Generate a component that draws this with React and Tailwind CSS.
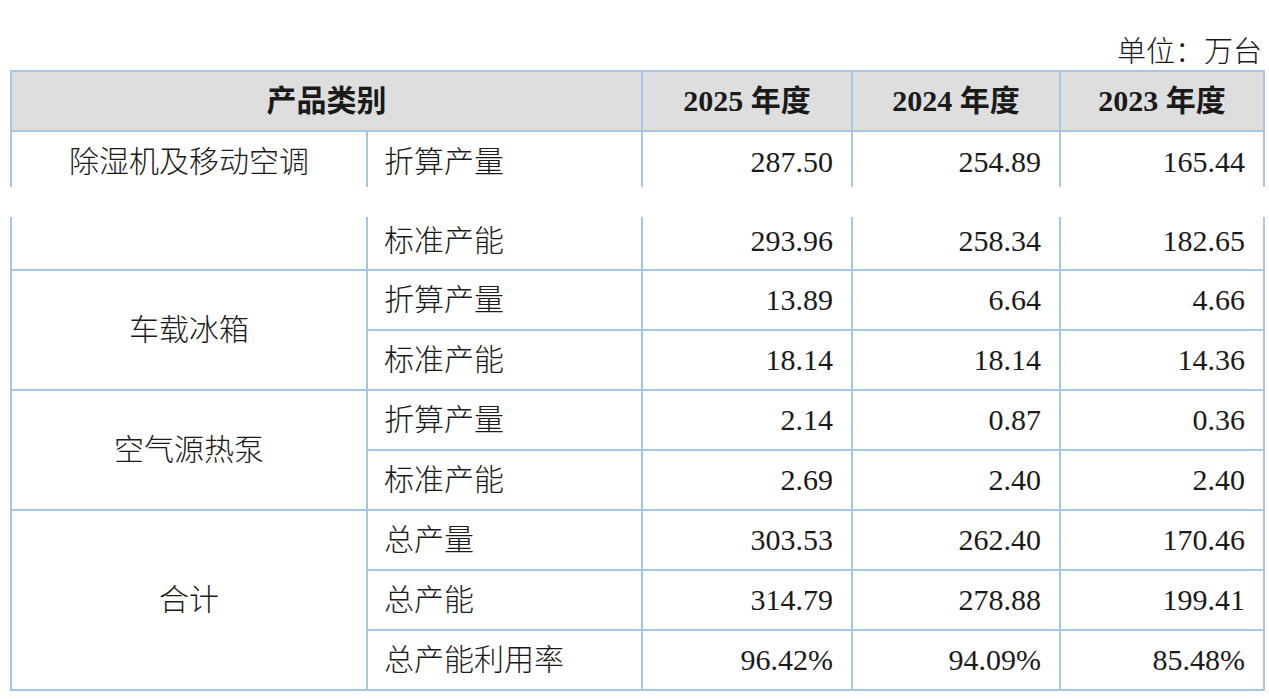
import React from "react";

const font = { fontFamily: '"Liberation Serif", "Noto Sans CJK SC", serif' };

const cell = "border-2 border-[#a7c6e6] text-[30px] leading-none text-[#1a1a1a]";
const num = `${cell} font-normal text-right pr-[18px]`;
const label = `${cell} font-light text-left pl-[16px]`;
const group = `${cell} font-light text-center`;

const Cols = () => (
  <colgroup>
    <col className="w-[356px]" />
    <col className="w-[275px]" />
    <col className="w-[210px]" />
    <col className="w-[208px]" />
    <col />
  </colgroup>
);

const rows = [
  { group: "车载冰箱", span: 2, items: [["折算产量", "13.89", "6.64", "4.66"], ["标准产能", "18.14", "18.14", "14.36"]] },
  { group: "空气源热泵", span: 2, items: [["折算产量", "2.14", "0.87", "0.36"], ["标准产能", "2.69", "2.40", "2.40"]] },
  {
    group: "合计",
    span: 3,
    items: [
      ["总产量", "303.53", "262.40", "170.46"],
      ["总产能", "314.79", "278.88", "199.41"],
      ["总产能利用率", "96.42%", "94.09%", "85.48%"],
    ],
  },
];

const App = () => {
  return (
    <div className="bg-white w-[1269px] h-[699px] overflow-hidden pt-[34px] pl-[10px]" style={font}>
      <div className="w-[1255px]">
        <div className="h-[36px] leading-[36px] text-right text-[29px] font-light text-[#1a1a1a] pr-[3px]">单位：万台</div>

        <table className="w-full table-fixed border-collapse">
          <Cols />
          <thead>
            <tr className="h-[60px] bg-[#dedede]">
              <th colSpan={2} className={`${cell} font-bold text-center`}>产品类别</th>
              <th className={`${cell} font-bold text-center`}>2025 年度</th>
              <th className={`${cell} font-bold text-center`}>2024 年度</th>
              <th className={`${cell} font-bold text-center`}>2023 年度</th>
            </tr>
          </thead>
          <tbody>
            <tr className="h-[56px]">
              <td className={`${group} border-b-0 pt-[4px]`}>除湿机及移动空调</td>
              <td className={`${label} border-b-0 pt-[4px]`}>折算产量</td>
              <td className={`${num} border-b-0 pt-[4px]`}>287.50</td>
              <td className={`${num} border-b-0 pt-[4px]`}>254.89</td>
              <td className={`${num} border-b-0 pt-[4px]`}>165.44</td>
            </tr>
          </tbody>
        </table>

        <table className="w-full table-fixed border-collapse mt-[30px]">
          <Cols />
          <tbody>
            <tr className="h-[53px]">
              <td className={`${group} border-t-0`}></td>
              <td className={`${label} border-t-0 pb-[4px]`}>标准产能</td>
              <td className={`${num} border-t-0 pb-[4px]`}>293.96</td>
              <td className={`${num} border-t-0 pb-[4px]`}>258.34</td>
              <td className={`${num} border-t-0 pb-[4px]`}>182.65</td>
            </tr>
            {rows.map((g) =>
              g.items.map((r, i) => (
                <tr key={g.group + r[0]} className="h-[60px]">
                  {i === 0 && (
                    <td rowSpan={g.span} className={group}>
                      {g.group}
                    </td>
                  )}
                  <td className={label}>{r[0]}</td>
                  <td className={num}>{r[1]}</td>
                  <td className={num}>{r[2]}</td>
                  <td className={num}>{r[3]}</td>
                </tr>
              ))
            )}
          </tbody>
        </table>
      </div>
    </div>
  );
};

export default App;
